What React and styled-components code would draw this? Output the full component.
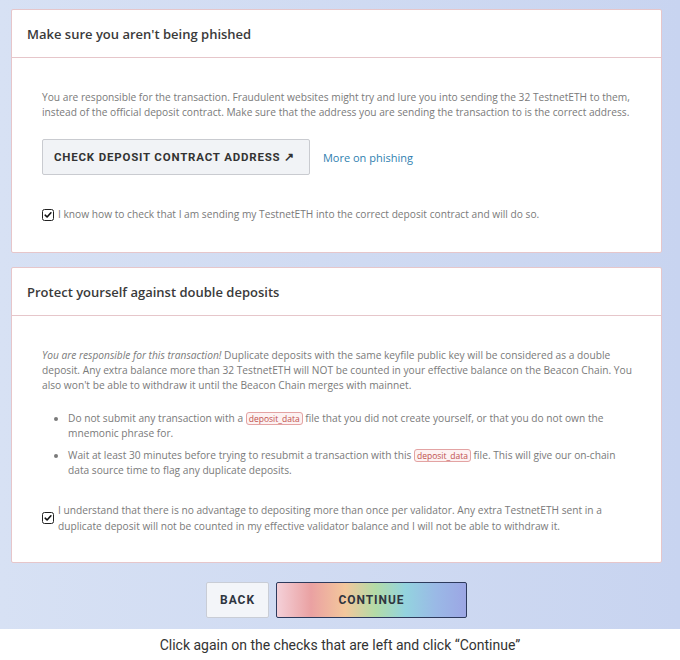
import React from 'react';
import styled, { createGlobalStyle } from 'styled-components';

const GlobalStyle = createGlobalStyle`
  html, body {
    margin: 0;
    padding: 0;
    background: #ffffff;
  }
  body {
    font-family: "Open Sans", "Liberation Sans", sans-serif;
  }
`;

const Page = styled.div`
  width: 680px;
  height: 660px;
  display: flex;
  flex-direction: column;
  overflow: hidden;
`;

const Stage = styled.div`
  background: linear-gradient(to right, #d7e1f4, #c8d4f0);
  padding: 9px 18px 11px 11px;
  display: flex;
  flex-direction: column;
  gap: 14px;
`;

const Card = styled.section`
  background: #fff;
  border: 1px solid #e6c6ca;
  border-radius: 2px;
`;

const CardHeader = styled.header`
  height: 47px;
  border-bottom: 1px solid #e6c6ca;
  display: flex;
  align-items: center;
  padding-left: 15px;
`;

const Title = styled.h2`
  margin: 0;
  font-size: 13px;
  font-weight: 600;
  color: #3a3a3a;
`;

const CardBody = styled.div`
  padding: 32px 29px ${(p) => p.$bottom || 30}px 30px;
  font-size: 10.2px;
  line-height: 15px;
  color: #7a7a7a;
`;

const Paragraph = styled.p`
  margin: 0;
`;

const ActionRow = styled.div`
  display: flex;
  align-items: center;
  gap: 13px;
  margin-top: 19px;
`;

const OutlineButton = styled.button`
  height: 36px;
  padding: 0 14px 0 11px;
  background: #f1f3f6;
  border: 1px solid #c9cbd0;
  border-radius: 2px;
  font-family: Roboto, "Liberation Sans", sans-serif;
  font-size: 11.5px;
  font-weight: 700;
  letter-spacing: 0.07em;
  color: #333;
  cursor: pointer;
`;

const Link = styled.a`
  font-size: 11px;
  color: #2f7fb0;
  text-decoration: none;
`;

const CheckRow = styled.label`
  display: flex;
  align-items: center;
  gap: 4px;
  margin-top: ${(p) => p.$top}px;
  line-height: ${(p) => p.$lh || 15}px;
`;

const Box = styled.span`
  flex: none;
  width: 10px;
  height: 10px;
  border: 1.5px solid #222;
  border-radius: 2.5px;
  display: flex;
  align-items: center;
  justify-content: center;
`;

const Em = styled.em`
  font-style: italic;
`;

const List = styled.ul`
  margin: 18px 0 0;
  padding-left: 26px;
  display: flex;
  flex-direction: column;
  gap: 7px;
`;

const Code = styled.code`
  font-family: "Open Sans", "Liberation Sans", sans-serif;
  font-size: 8.5px;
  line-height: 11px;
  color: #c0504d;
  background: #fdf2f2;
  border: 1px solid #e3a3a3;
  border-radius: 3px;
  padding: 0 2px;
`;

const Footer = styled.div`
  display: flex;
  justify-content: center;
  gap: 7px;
  margin-top: 5px;
`;

const NavButton = styled.button`
  height: 36px;
  width: ${(p) => p.$w}px;
  border: 1px solid ${(p) => (p.$primary ? '#2d3a5c' : '#c9cdd6')};
  border-radius: 2px;
  background: ${(p) =>
    p.$primary
      ? 'linear-gradient(to right, #f4d0d8 0%, #eaa1a2 18%, #f3c79c 36%, #b3dba7 52%, #93d3df 68%, #9ab9e6 84%, #9ca6e4 100%)'
      : '#f3f5f9'};
  font-family: Roboto, "Liberation Sans", sans-serif;
  font-size: 12px;
  font-weight: 700;
  letter-spacing: 0.08em;
  color: #2f3540;
  cursor: pointer;
`;

const Caption = styled.p`
  margin: 0;
  flex: 1;
  display: flex;
  align-items: center;
  justify-content: center;
  font-family: Roboto, "Liberation Sans", sans-serif;
  font-size: 14px;
  color: #333;
`;

const Check = () => (
  <Box>
    <svg width="8" height="8" viewBox="0 0 8 8">
      <path d="M1.2 4.2 L3.1 6 L6.9 1.8" fill="none" stroke="#111" strokeWidth="1.6" strokeLinecap="round" strokeLinejoin="round" />
    </svg>
  </Box>
);

export default function App() {
  return (
    <Page>
      <GlobalStyle />
      <Stage>
        <Card>
          <CardHeader>
            <Title>Make sure you aren't being phished</Title>
          </CardHeader>
          <CardBody>
            <Paragraph>
              You are responsible for the transaction. Fraudulent websites might try and lure you into sending the 32
              TestnetETH to them, instead of the official deposit contract. Make sure that the address you are sending
              the transaction to is the correct address.
            </Paragraph>
            <ActionRow>
              <OutlineButton>CHECK DEPOSIT CONTRACT ADDRESS ↗</OutlineButton>
              <Link href="#">More on phishing</Link>
            </ActionRow>
            <CheckRow $top={32}>
              <Check />
              I know how to check that I am sending my TestnetETH into the correct deposit contract and will do so.
            </CheckRow>
          </CardBody>
        </Card>

        <Card>
          <CardHeader>
            <Title>Protect yourself against double deposits</Title>
          </CardHeader>
          <CardBody $bottom={28}>
            <Paragraph>
              <Em>You are responsible for this transaction!</Em> Duplicate deposits with the same keyfile public key
              will be considered as a double deposit. Any extra balance more than 32 TestnetETH will NOT be counted in
              your effective balance on the Beacon Chain. You also won't be able to withdraw it until the Beacon Chain
              merges with mainnet.
            </Paragraph>
            <List>
              <li>
                Do not submit any transaction with a <Code>deposit_data</Code> file that you did not create yourself,
                or that you do not own the mnemonic phrase for.
              </li>
              <li>
                Wait at least 30 minutes before trying to resubmit a transaction with this <Code>deposit_data</Code>{' '}
                file. This will give our on-chain data source time to flag any duplicate deposits.
              </li>
            </List>
            <CheckRow $top={24} $lh={16}>
              <Check />
              <span>
                I understand that there is no advantage to depositing more than once per validator. Any extra
                TestnetETH sent in a duplicate deposit will not be counted in my effective validator balance and I will
                not be able to withdraw it.
              </span>
            </CheckRow>
          </CardBody>
        </Card>

        <Footer>
          <NavButton $w={63}>BACK</NavButton>
          <NavButton $w={191} $primary>CONTINUE</NavButton>
        </Footer>
      </Stage>
      <Caption>Click again on the checks that are left and click “Continue”</Caption>
    </Page>
  );
}
